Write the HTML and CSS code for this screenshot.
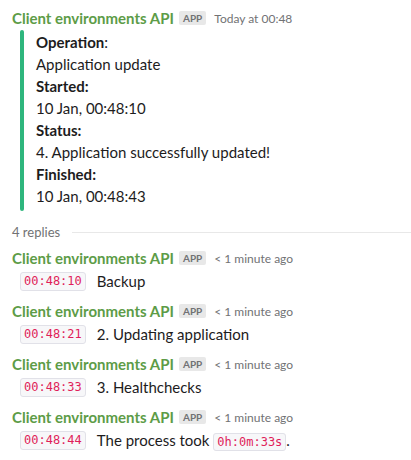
FILE: index.html
```html
<!DOCTYPE html>
<html>
<head>
<meta charset="utf-8">
<link rel="stylesheet" href="styles.css">
</head>
<body>
<div class="page">
  <div class="msg-head">
    <span class="author">Client environments API</span>
    <span class="badge">APP</span>
    <span class="time">Today at 00:48</span>
  </div>
  <div class="attachment">
    <div class="bar"></div>
    <div class="fields">
      <div class="field-title">Operation<span class="colon">:</span></div>
      <div class="field-value">Application update</div>
      <div class="field-title">Started:</div>
      <div class="field-value">10 Jan, 00:48:10</div>
      <div class="field-title">Status:</div>
      <div class="field-value">4. Application successfully updated!</div>
      <div class="field-title">Finished:</div>
      <div class="field-value">10 Jan, 00:48:43</div>
    </div>
  </div>
  <div class="replies">
    <span class="replies-count">4 replies</span>
    <span class="replies-line"></span>
  </div>
  <div class="reply">
    <div class="msg-head">
      <span class="author">Client environments API</span>
      <span class="badge">APP</span>
      <span class="time">&lt; 1 minute ago</span>
    </div>
    <div class="reply-body"><code class="code">00:48:10</code><span class="text">Backup</span></div>
  </div>
  <div class="reply">
    <div class="msg-head">
      <span class="author">Client environments API</span>
      <span class="badge">APP</span>
      <span class="time">&lt; 1 minute ago</span>
    </div>
    <div class="reply-body"><code class="code">00:48:21</code><span class="text">2. Updating application</span></div>
  </div>
  <div class="reply">
    <div class="msg-head">
      <span class="author">Client environments API</span>
      <span class="badge">APP</span>
      <span class="time">&lt; 1 minute ago</span>
    </div>
    <div class="reply-body"><code class="code">00:48:33</code><span class="text">3. Healthchecks</span></div>
  </div>
  <div class="reply">
    <div class="msg-head">
      <span class="author">Client environments API</span>
      <span class="badge">APP</span>
      <span class="time">&lt; 1 minute ago</span>
    </div>
    <div class="reply-body"><code class="code">00:48:44</code><span class="text">The process took <code class="code inline">0h:0m:33s</code>.</span></div>
  </div>
</div>
</body>
</html>
```

FILE: styles.css
```css
html, body {
  margin: 0;
  padding: 0;
  background: #ffffff;
}
body {
  font-family: Lato, "Noto Sans", sans-serif;
  color: #1d1c1d;
}
.page {
  padding: 7px 0 0 12px;
}
.msg-head {
  display: flex;
  align-items: center;
  height: 22px;
  white-space: nowrap;
}
.author {
  font-weight: 700;
  font-size: 15px;
  color: #5d9c47;
}
.badge {
  margin-left: 5px;
  background: #e8e8e8;
  color: #717274;
  font-size: 10px;
  font-weight: 700;
  padding: 1px 4px;
  border-radius: 2px;
  line-height: 12px;
}
.time {
  margin-left: 8px;
  font-size: 12px;
  color: #717274;
}
.attachment {
  display: flex;
  margin-left: 8px;
  margin-top: 1px;
}
.bar {
  width: 4px;
  border-radius: 2px;
  background: #2eb67d;
  flex: none;
}
.fields {
  padding: 1px 0 4px 12px;
  font-size: 15px;
  line-height: 22px;
}
.field-title {
  font-weight: 700;
}
.colon {
  font-weight: 400;
}
.replies {
  display: flex;
  align-items: center;
  margin-top: 10px;
  height: 22px;
}
.replies-count {
  font-size: 13px;
  color: #717274;
}
.replies-line {
  flex: 1;
  height: 1px;
  background: #e8e8e8;
  margin-left: 12px;
}
.reply {
  padding: 4px 0 3px;
}
.reply-body {
  display: flex;
  align-items: center;
  height: 24px;
  padding-left: 8px;
  font-size: 15px;
  white-space: nowrap;
}
.code {
  font-family: "DejaVu Sans Mono", "Liberation Mono", monospace;
  font-size: 12px;
  color: #e01e5a;
  background: #f7f7f9;
  border: 1px solid #e1e1e8;
  border-radius: 3px;
  padding: 1px 3px;
  line-height: 15px;
}
.text {
  margin-left: 11px;
}
.inline {
  margin-left: 0;
}
```
